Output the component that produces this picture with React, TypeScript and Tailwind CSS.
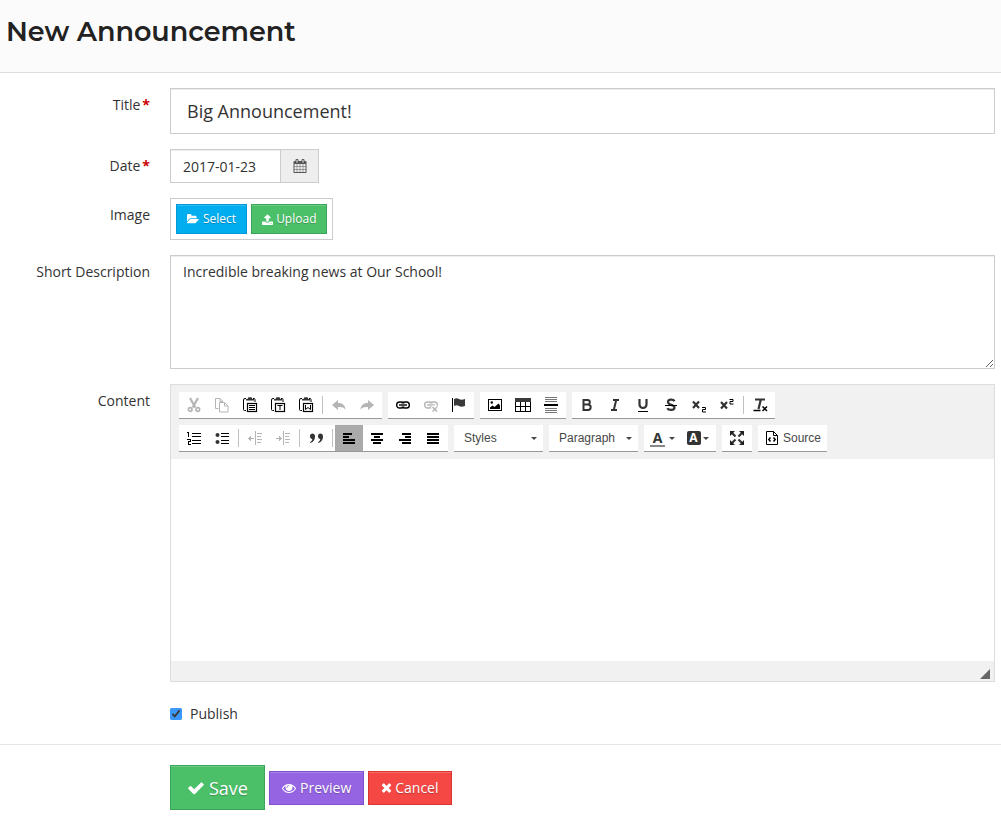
import type { ReactNode } from "react";

const FA_ICONS = {
  calendar: {
    viewBox: "0 0 1792 1792",
    d: "M192 1664h288v-288h-288v288zm352 0h320v-288h-320v288zm-352-352h288v-320h-288v320zm352 0h320v-320h-320v320zm-352-384h288v-288h-288v288zm736 736h320v-288h-320v288zm-384-736h320v-288h-320v288zm768 736h288v-288h-288v288zm-384-352h320v-320h-320v320zm-352-864v-288q0-13-9.5-22.5t-22.5-9.5h-64q-13 0-22.5 9.5t-9.5 22.5v288q0 13 9.5 22.5t22.5 9.5h64q13 0 22.5-9.5t9.5-22.5zm736 864h288v-320h-288v320zm-384-384h320v-288h-320v288zm384 0h288v-288h-288v288zm32-480v-288q0-13-9.5-22.5t-22.5-9.5h-64q-13 0-22.5 9.5t-9.5 22.5v288q0 13 9.5 22.5t22.5 9.5h64q13 0 22.5-9.5t9.5-22.5zm384-64v1280q0 52-38 90t-90 38h-1408q-52 0-90-38t-38-90v-1280q0-52 38-90t90-38h128v-96q0-66 47-113t113-47h64q66 0 113 47t47 113v96h384v-96q0-66 47-113t113-47h64q66 0 113 47t47 113v96h128q52 0 90 38t38 90z",
  },
  folder: {
    viewBox: "0 0 1850 1792",
    d: "M1815 952q0 31-31 66l-336 396q-43 51-120.5 86.5t-143.5 35.5h-1088q-34 0-60.5-13t-26.5-43q0-31 31-66l336-396q43-51 120.5-86.5t143.5-35.5h1088q34 0 60.5 13t26.5 43zm-343-344v160h-832q-94 0-197 47.5t-164 119.5l-337 396-5 6q0-4-.5-12.5t-.5-12.5v-960q0-92 66-158t158-66h320q92 0 158 66t66 158v32h544q92 0 158 66t66 158z",
  },
  upload: {
    viewBox: "64 0 1664 1664",
    d: "M1344 1472q0-26-19-45t-45-19-45 19-19 45 19 45 45 19 45-19 19-45zm256 0q0-26-19-45t-45-19-45 19-19 45 19 45 45 19 45-19 19-45zm128-224v320q0 40-28 68t-68 28h-1472q-40 0-68-28t-28-68v-320q0-40 28-68t68-28h427q21 56 70.5 92t110.5 36h256q61 0 110.5-36t70.5-92h427q40 0 68 28t28 68zm-325-648q-17 40-59 40h-256v448q0 26-19 45t-45 19h-256q-26 0-45-19t-19-45v-448h-256q-42 0-59-40-17-39 14-69l448-448q18-19 45-19t45 19l448 448q31 30 14 69z",
  },
  check: {
    viewBox: "0 0 1792 1792",
    d: "M1671 566q0 40-28 68l-724 724-136 136q-28 28-68 28t-68-28l-136-136-362-362q-28-28-28-68t28-68l136-136q28-28 68-28t68 28l294 295 656-657q28-28 68-28t68 28l136 136q28 28 28 68z",
  },
  eye: {
    viewBox: "0 0 1792 1792",
    d: "M1664 960q-152-236-381-353 61 104 61 225 0 185-131.5 316.5t-316.5 131.5-316.5-131.5-131.5-316.5q0-121 61-225-229 117-381 353 133 205 333.5 326.5t434.5 121.5 434.500-121.500 333.500-326.500zm-720-384q0-20-14-34t-34-14q-125 0-214.500 89.500t-89.500 214.500q0 20 14 34t34 14 34-14 14-34q0-86 61-147t147-61q20 0 34-14t14-34zm848 384q0 34-20 69-140 230-376.500 368.500t-499.500 138.500-499.500-139-376.500-368q-20-35-20-69t20-69q140-229 376.500-368t499.500-139 499.500 139 376.500 368q20 35 20 69z",
  },
  times: {
    viewBox: "192 192 1408 1536",
    d: "M1490 1322q0 40-28 68l-136 136q-28 28-68 28t-68-28l-294-294-294 294q-28 28-68 28t-68-28l-136-136q-28-28-28-68t28-68l294-294-294-294q-28-28-28-68t28-68l136-136q28-28 68-28t68 28l294 294 294-294q28-28 68-28t68 28l136 136q28 28 28 68t-28 68l-294 294 294 294q28 28 28 68z",
  },
};

function Fa({ name, className }: { name: keyof typeof FA_ICONS; className: string }) {
  const icon = FA_ICONS[name];
  return (
    <svg viewBox={icon.viewBox} fill="currentColor" className={`shrink-0 ${className}`} aria-hidden="true">
      <path d={icon.d} />
    </svg>
  );
}

// 16x16 editor glyph
function Glyph({ children, crisp = false }: { children: ReactNode; crisp?: boolean }) {
  return (
    <svg
      viewBox="0 0 16 16"
      fill="none"
      stroke="currentColor"
      shapeRendering={crisp ? "crispEdges" : "auto"}
      className="size-4 shrink-0"
      aria-hidden="true"
    >
      {children}
    </svg>
  );
}

function Clipboard({ children }: { children: ReactNode }) {
  return (
    <Glyph>
      <path d="M4 1.500H3a1.500 1.500 0 0 0-1.500 1.500V12.500a1 1 0 0 0 1 1H4M11 1.500h1a1 1 0 0 1 1 1V5" />
      <path d="M4 3.500V2h1.500L6.500 .300h3L10.500 2H12v1.500z" fill="#333" stroke="none" />
      <rect x="5.500" y="6.500" width="9" height="8" fill="#fff" strokeWidth="1.200" />
      {children}
    </Glyph>
  );
}

const scissors = (
  <Glyph>
    <path d="M4 1l5.300 9.500M12 1L6.700 10.500" strokeWidth="2.200" />
    <circle cx="4.200" cy="12.500" r="1.800" strokeWidth="1.700" />
    <circle cx="11.800" cy="12.500" r="1.800" strokeWidth="1.700" />
  </Glyph>
);

const copy = (
  <Glyph>
    <path d="M4.500 11.500H1.500v-10h4.500l3 3M6 1.500v3h3" />
    <path d="M5.500 5.500h5l3.500 3.500v6h-8.500zM10.500 5.500v3.500H14" />
  </Glyph>
);

const undoPath = "M1 8l6-5v3c4 0 7 1.500 7.500 6.500C13 10.500 11 9.800 7 10v3z";

const undo = (
  <Glyph>
    <path d={undoPath} fill="currentColor" stroke="none" />
  </Glyph>
);

const redo = (
  <Glyph>
    <path d={undoPath} fill="currentColor" stroke="none" transform="matrix(-1 0 0 1 16 0)" />
  </Glyph>
);

const chain = (
  <>
    <rect x="1.700" y="5" width="7.300" height="6" rx="2.800" strokeWidth="1.400" />
    <rect x="7" y="5" width="7.300" height="6" rx="2.800" strokeWidth="1.400" />
    <path d="M4 8h8" stroke="#fff" strokeWidth="3" />
    <path d="M4 8h8" strokeWidth="1.400" />
  </>
);

const flag = (
  <Glyph>
    <path d="M1.500 1v14" />
    <path d="M3 2c2-1 3.500-1 5 0s3.500 1 6 0v7c-2.500 1-4.500 1-6 0s-3-1-5 0z" fill="#3a3a3a" stroke="none" />
  </Glyph>
);

const image = (
  <Glyph>
    <rect x="1.500" y="2.500" width="13" height="11" />
    <circle cx="4.800" cy="5.500" r="1.200" fill="currentColor" stroke="none" />
    <path d="M3 12V10.500L5.500 8.500 7.500 10l4-3.500L13 8.500V12z" fill="currentColor" stroke="none" />
  </Glyph>
);

const table = (
  <Glyph crisp>
    <path d="M0 1h16v4H0z" fill="#3a3a3a" stroke="none" />
    <path d="M.500 4.500v9.500h15V4.500M5.500 5v9M10.500 5v9M1 9.500h14" />
  </Glyph>
);

const rule = (
  <Glyph crisp>
    <path d="M2 .500h12M2 2.500h12M2 4.500h12M2 11.500h12M2 13.500h12M2 15.500h12" stroke="#777" />
    <path d="M1 8h14" strokeWidth="2" />
  </Glyph>
);

const removeFormat = (
  <Glyph>
    <path d="M3 2.500h10M8.700 3L6.500 12" stroke="#333" strokeWidth="2.200" />
    <path d="M1.500 13.500h7M10.500 9.500l4.500 4.500M15 9.500l-4.500 4.500" strokeWidth="1.500" />
  </Glyph>
);

const numbered = (
  <Glyph crisp>
    <path d="M1 2.500h1.500M2.500 2v5M1 9.500h3v2h-2v2.500h3" />
    <path d="M6 3.500h9M6 6.500h9M6 10.500h9M6 13.500h9" />
  </Glyph>
);

const bulleted = (
  <Glyph>
    <circle cx="3.500" cy="5" r="2" fill="#333" stroke="none" />
    <circle cx="3.500" cy="12" r="2" fill="#333" stroke="none" />
    <path d="M7 3.500h8M7 6.500h8M7 10.500h8M7 13.500h8" />
  </Glyph>
);

const indentLines = <path d="M8.500 1v14M10 3.500h5M10 6.500h4M10 9.500h5M10 12.500h4" />;

const outdent = (
  <Glyph crisp>
    {indentLines}
    <path d="M1 8.500h6M2 7.500h2M2 9.500h2M3 6.500h1M3 10.500h1" />
  </Glyph>
);

const indent = (
  <Glyph crisp>
    {indentLines}
    <path d="M1 8.500h6M4 7.500h2M4 9.500h2M4 6.500h1M4 10.500h1" />
  </Glyph>
);

const quote = (
  <Glyph>
    <g fill="#333" stroke="none">
      <path d="M4 3.500a3 3 0 0 1 3 3c0 3-1.500 5.500-4.500 6.500l-.500-.800C3.500 11.500 4.300 10.300 4.300 9.300A3 3 0 0 1 4 3.500z" />
      <path d="M12 3.500a3 3 0 0 1 3 3c0 3-1.500 5.500-4.500 6.500l-.500-.800c1.500-.700 2.300-1.900 2.300-2.900A3 3 0 0 1 12 3.500z" />
    </g>
  </Glyph>
);

function Lines({ d }: { d: string }) {
  return (
    <Glyph crisp>
      <path d={d} strokeWidth="2" />
    </Glyph>
  );
}

const maximize = (
  <Glyph>
    <path d="M2.500 2.500l4 4M13.500 2.500l-4 4M2.500 13.500l4-4M13.500 13.500l-4-4" stroke="#333" strokeWidth="2.200" />
    <path d="M1 1h5L1 6zM15 1v5l-5-5zM1 15v-5l5 5zM15 15h-5l5-5z" fill="#222" stroke="none" />
  </Glyph>
);

const source = (
  <Glyph>
    <path d="M2.500 1.500h7l4 4v9h-11zM9.500 1.500v4h4" />
    <path d="M6.500 7.500L4.800 9.500l1.700 2M9.500 7.500l1.700 2-1.700 2" strokeWidth="1.500" />
  </Glyph>
);

function Tool({
  label,
  children,
  disabled = false,
  active = false,
}: {
  label: string;
  children: ReactNode;
  disabled?: boolean;
  active?: boolean;
}) {
  return (
    <button
      type="button"
      aria-label={label}
      disabled={disabled}
      className={`flex h-[26px] min-w-7 items-center justify-center text-black disabled:text-[#b5b5b5] ${active ? "bg-[#aaa]" : ""}`}
    >
      {children}
    </button>
  );
}

function Group({ children }: { children: ReactNode }) {
  return <div className="flex items-center border-b border-[#999] bg-white px-px">{children}</div>;
}

function Separator() {
  return <span className="mx-0.5 h-[18px] w-px bg-[#c0c0c0]" />;
}

function Caret() {
  return <span className="border-x-3 border-t-3 border-x-transparent border-t-[#474747]" />;
}

function Combo({ label, value }: { label: string; value: string }) {
  return (
    <div className="relative flex border-b border-[#999] bg-white">
      <select
        aria-label={label}
        className="h-[26px] w-[89px] appearance-none bg-transparent pr-4 pl-[10px] font-['Liberation_Sans',sans-serif] text-xs text-[#474747]"
      >
        <option>{value}</option>
      </select>
      <span className="pointer-events-none absolute inset-y-0 right-1.5 flex items-center">
        <Caret />
      </span>
    </div>
  );
}

function Row({ label, htmlFor, required = false, children }: { label?: string; htmlFor?: string; required?: boolean; children: ReactNode }) {
  return (
    <div className="flex gap-5">
      <div className="w-[150px] shrink-0 pt-[7px] text-right">
        {label && (
          <label htmlFor={htmlFor}>
            {label}
            {required && <span className="ml-0.5 font-bold text-[#c00]">*</span>}
          </label>
        )}
      </div>
      <div className="min-w-0 flex-1">{children}</div>
    </div>
  );
}

const inputStyle = "block border border-[#ccc] bg-white shadow-[inset_0_1px_1px_rgba(0,0,0,0.075)] outline-none";
const buttonStyle =
  "flex items-center border font-medium text-white [text-shadow:0_1px_1px_rgba(0,0,0,0.25)] shadow-[inset_0_1px_0_rgba(255,255,255,0.2)]";

function Editor() {
  return (
    <div className="border border-[#ddd]">
      <div className="flex flex-col gap-1.5 bg-[#f1f1f1] px-2 py-[7px]">
        <div className="flex flex-wrap gap-1.5">
          <Group>
            <Tool label="Cut" disabled>{scissors}</Tool>
            <Tool label="Copy" disabled>{copy}</Tool>
            <Tool label="Paste">
              <Clipboard>
                <path d="M7 8.500h6M7 10.500h6M7 12.500h6" />
              </Clipboard>
            </Tool>
            <Tool label="Paste as plain text">
              <Clipboard>
                <path d="M7.500 8.500h5M10 8.500v4.500" />
              </Clipboard>
            </Tool>
            <Tool label="Paste from Word">
              <Clipboard>
                <path d="M7.500 8v4.500L10 10.500l2.500 2V8" />
              </Clipboard>
            </Tool>
            <Separator />
            <Tool label="Undo" disabled>{undo}</Tool>
            <Tool label="Redo" disabled>{redo}</Tool>
          </Group>
          <Group>
            <Tool label="Link">
              <Glyph>{chain}</Glyph>
            </Tool>
            <Tool label="Unlink" disabled>
              <Glyph>
                {chain}
                <path d="M9 9.500l5.500 5.500M14.500 9.500l-5.500 5.500" stroke="#fff" strokeWidth="4" />
                <path d="M9.500 10l4.500 4.500M14 10l-4.500 4.500" strokeWidth="1.500" />
              </Glyph>
            </Tool>
            <Tool label="Anchor">{flag}</Tool>
          </Group>
          <Group>
            <Tool label="Image">{image}</Tool>
            <Tool label="Table">{table}</Tool>
            <Tool label="Horizontal line">{rule}</Tool>
          </Group>
          <Group>
            <Tool label="Bold">
              <Glyph>
                <path d="M4.500 3h4a2.200 2.200 0 0 1 0 4.600h-4zM4.500 7.600h4.500a2.600 2.600 0 0 1 0 5.400h-4.500z" stroke="#333" strokeWidth="2" />
              </Glyph>
            </Tool>
            <Tool label="Italic">
              <Glyph>
                <path d="M6 3h6M4 13h6M9.200 3L6.800 13" stroke="#333" strokeWidth="2" />
              </Glyph>
            </Tool>
            <Tool label="Underline">
              <Glyph>
                <path d="M4.500 2v5.500a3.500 3.500 0 0 0 7 0V2" stroke="#333" strokeWidth="2.200" />
                <path d="M3 14.500h10" />
              </Glyph>
            </Tool>
            <Tool label="Strikethrough">
              <Glyph>
                <path d="M11.500 4.300C10.500 2 5 2 5 5c0 3.500 6.500 2.200 6.500 5.500 0 3.200-6 3-7.200.700" stroke="#333" strokeWidth="2.200" />
                <path d="M2 8.500h12" />
              </Glyph>
            </Tool>
            <Tool label="Subscript">
              <Glyph>
                <path d="M2 4.500l6 6.500M8 4.500l-6 6.500" stroke="#333" strokeWidth="2.200" />
                <path d="M11 10.500h3.500v2H11.500v2.500H15" />
              </Glyph>
            </Tool>
            <Tool label="Superscript">
              <Glyph>
                <path d="M2 5l6 6.500M8 5l-6 6.500" stroke="#333" strokeWidth="2.200" />
                <path d="M10.500 2.500H14v2h-3v2.500h3.500" />
              </Glyph>
            </Tool>
            <Separator />
            <Tool label="Remove format">{removeFormat}</Tool>
          </Group>
        </div>
        <div className="flex flex-wrap gap-1.5">
          <Group>
            <Tool label="Numbered list">{numbered}</Tool>
            <Tool label="Bulleted list">{bulleted}</Tool>
            <Separator />
            <Tool label="Decrease indent" disabled>{outdent}</Tool>
            <Tool label="Increase indent" disabled>{indent}</Tool>
            <Separator />
            <Tool label="Block quote">{quote}</Tool>
            <Separator />
            <Tool label="Align left" active>
              <Lines d="M2 4h9M2 7h6M2 10h12M2 13h9M2 13h12" />
            </Tool>
            <Tool label="Center">
              <Lines d="M2 4h12M5 7h6M2 10h12M4 13h8" />
            </Tool>
            <Tool label="Align right">
              <Lines d="M5 4h9M8 7h6M2 10h12M5 13h9" />
            </Tool>
            <Tool label="Justify">
              <Lines d="M2 4h12M2 7h12M2 10h12M2 13h12" />
            </Tool>
          </Group>
          <Combo label="Formatting styles" value="Styles" />
          <Combo label="Paragraph format" value="Paragraph" />
          <Group>
            <Tool label="Text color">
              <span className="flex w-[35px] items-center justify-center gap-1">
                <span className="h-[17px] w-[15px] border-b-2 border-[#888] font-['Open_Sans',sans-serif] text-sm leading-4 font-bold text-[#333]">
                  A
                </span>
                <Caret />
              </span>
            </Tool>
            <Tool label="Background color">
              <span className="flex w-[35px] items-center justify-center gap-0.5">
                <span className="size-[14px] rounded-xs bg-[#333] font-['Open_Sans',sans-serif] text-xs leading-[14px] font-bold text-white">
                  A
                </span>
                <Caret />
              </span>
            </Tool>
          </Group>
          <Group>
            <Tool label="Maximize">{maximize}</Tool>
          </Group>
          <Group>
            <Tool label="Source">
              <span className="flex items-center gap-[3px] px-[5px] font-['Liberation_Sans',sans-serif] text-xs text-[#474747]">
                <span className="text-black">{source}</span>
                Source
              </span>
            </Tool>
          </Group>
        </div>
      </div>
      <textarea id="content" className="block h-[202px] w-full resize-none bg-white p-5 outline-none" />
      <div className="flex h-5 items-end justify-end bg-[#f1f1f1] pr-1 pb-0.5">
        <svg viewBox="0 0 10 10" className="size-[10px]" aria-hidden="true">
          <path d="M10 0v10H0z" fill="#666" />
        </svg>
      </div>
    </div>
  );
}

export default function App() {
  return (
    <div className="min-h-screen bg-white font-['Open_Sans',sans-serif] text-sm text-[#333]">
      <header className="border-b border-[#ddd] bg-[#fbfbfb] px-1.5 pt-3 pb-5">
        <h1 className="font-[Montserrat,Inter,sans-serif] text-[27px] leading-10 font-semibold text-[#222]">New Announcement</h1>
      </header>
      <form onSubmit={(e) => e.preventDefault()}>
        <div className="flex flex-col gap-[15px] pt-[15px] pr-1.5 pb-5">
          <Row label="Title" htmlFor="title" required>
            <input id="title" type="text" defaultValue="Big Announcement!" className={`${inputStyle} h-[46px] w-full px-4 text-lg`} />
          </Row>
          <Row label="Date" htmlFor="date" required>
            <div className="flex">
              <input id="date" type="text" defaultValue="2017-01-23" className={`${inputStyle} h-[34px] w-[111px] px-3`} />
              <button
                type="button"
                aria-label="Choose date"
                className="flex w-[38px] items-center justify-center border border-l-0 border-[#ccc] bg-[#eee] text-[#555]"
              >
                <Fa name="calendar" className="size-[14px]" />
              </button>
            </div>
          </Row>
          <Row label="Image" htmlFor="select-image">
            <div className="inline-flex gap-1 border border-[#ccc] p-[5px] align-top">
              <button id="select-image" type="button" className={`${buttonStyle} h-[30px] gap-1 border-[#0098d6] bg-[#00aeef] px-2.5 text-xs`}>
                <Fa name="folder" className="size-3" />
                Select
              </button>
              <button type="button" className={`${buttonStyle} h-[30px] gap-[3px] border-[#3ba35a] bg-[#4cc069] px-2.5 text-xs`}>
                <Fa name="upload" className="size-[11px]" />
                Upload
              </button>
            </div>
          </Row>
          <Row label="Short Description" htmlFor="description">
            <textarea
              id="description"
              defaultValue="Incredible breaking news at Our School!"
              className={`${inputStyle} h-[114px] w-full px-3 py-1.5 leading-5`}
            />
          </Row>
          <Row label="Content" htmlFor="content">
            <Editor />
          </Row>
          <Row>
            <label className="inline-flex items-center gap-2 pt-[7px] align-top">
              <input type="checkbox" defaultChecked className="size-3 accent-[#3b99fc]" />
              Publish
            </label>
          </Row>
        </div>
        <div className="flex items-center gap-1 border-t border-[#e5e5e5] py-5 pl-[170px]">
          <button type="submit" className={`${buttonStyle} h-[45px] gap-1 border-[#3ba35a] bg-[#4cc069] px-4 text-lg`}>
            <Fa name="check" className="size-[18px]" />
            Save
          </button>
          <button type="button" className={`${buttonStyle} h-[34px] gap-1 border-[#7f4fcf] bg-[#9564e2] px-3 text-sm`}>
            <Fa name="eye" className="size-[14px]" />
            Preview
          </button>
          <button type="button" className={`${buttonStyle} h-[34px] gap-[3px] border-[#d93632] bg-[#f54744] px-3 text-sm`}>
            <Fa name="times" className="h-3 w-[11px]" />
            Cancel
          </button>
        </div>
      </form>
    </div>
  );
}
